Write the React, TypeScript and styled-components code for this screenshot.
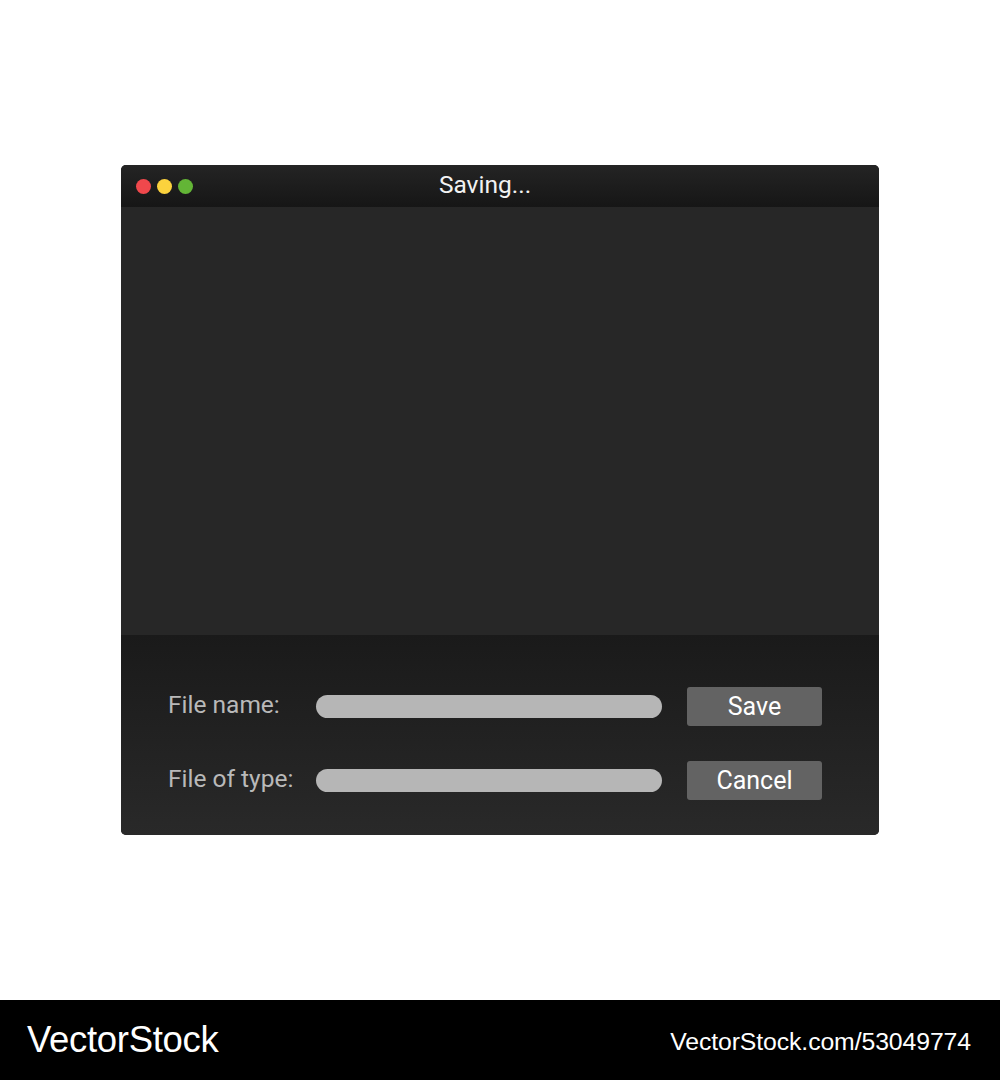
import React from 'react'
import styled, { createGlobalStyle } from 'styled-components'

const GlobalStyle = createGlobalStyle`
  html, body {
    margin: 0;
    padding: 0;
    background: #ffffff;
  }
  body {
    font-family: Roboto, "Liberation Sans", Arial, sans-serif;
  }
`

const Page = styled.div`
  width: 1000px;
  height: 1080px;
  display: flex;
  flex-direction: column;
`

const Stage = styled.div`
  flex: 1;
  display: flex;
  justify-content: center;
  align-items: flex-start;
  padding-top: 165px;
  box-sizing: border-box;
`

const Window = styled.div`
  width: 758px;
  border-radius: 5px;
  overflow: hidden;
  display: flex;
  flex-direction: column;
  background: #272727;
`

const TitleBar = styled.div`
  position: relative;
  height: 42px;
  display: flex;
  align-items: center;
  justify-content: center;
  background: linear-gradient(#242424, #161616);
`

const Lights = styled.div`
  position: absolute;
  left: 15px;
  top: 14px;
  display: flex;
  gap: 6px;
`

const Light = styled.span<{ $color: string }>`
  width: 15px;
  height: 15px;
  border-radius: 50%;
  background: ${({ $color }) => $color};
`

const Title = styled.div`
  color: #f2f2f2;
  font-size: 24.5px;
  margin-left: -30px;
  margin-top: -3px;
`

const Content = styled.div`
  height: 428px;
  background: #272727;
`

const Footer = styled.div`
  height: 200px;
  box-sizing: border-box;
  padding: 52px 57px 35px 47px;
  display: flex;
  flex-direction: column;
  gap: 35px;
  background: linear-gradient(#1a1a1a, #292929);
`

const Row = styled.div`
  display: flex;
  align-items: center;
  height: 39px;
`

const Label = styled.div`
  width: 148px;
  color: #b9b9b9;
  font-size: 24.5px;
  margin-top: -5px;
  white-space: nowrap;
`

const Field = styled.div`
  width: 346px;
  height: 23px;
  border-radius: 12px;
  background: #b6b6b6;
`

const Button = styled.div`
  margin-left: 25px;
  width: 135px;
  height: 39px;
  border-radius: 3px;
  background: #636363;
  color: #ffffff;
  font-size: 25px;
  display: flex;
  align-items: center;
  justify-content: center;
`

const Brand = styled.div`
  height: 80px;
  background: #000000;
  display: flex;
  align-items: center;
  justify-content: space-between;
  padding: 0 29px 0 27px;
  color: #ffffff;
  font-family: "Liberation Sans", Arial, sans-serif;
`

const Logo = styled.div`
  font-size: 36.5px;
  letter-spacing: -0.3px;
`

const Ref = styled.div`
  font-size: 24.8px;
  margin-top: 3px;
  letter-spacing: -0.1px;
`

export default function App() {
  return (
    <Page>
      <GlobalStyle />
      <Stage>
        <Window>
          <TitleBar>
            <Lights>
              <Light $color="#f0484c" />
              <Light $color="#fbd23d" />
              <Light $color="#63b536" />
            </Lights>
            <Title>Saving...</Title>
          </TitleBar>
          <Content />
          <Footer>
            <Row>
              <Label>File name:</Label>
              <Field />
              <Button>Save</Button>
            </Row>
            <Row>
              <Label>File of type:</Label>
              <Field />
              <Button>Cancel</Button>
            </Row>
          </Footer>
        </Window>
      </Stage>
      <Brand>
        <Logo>VectorStock</Logo>
        <Ref>VectorStock.com/53049774</Ref>
      </Brand>
    </Page>
  )
}
